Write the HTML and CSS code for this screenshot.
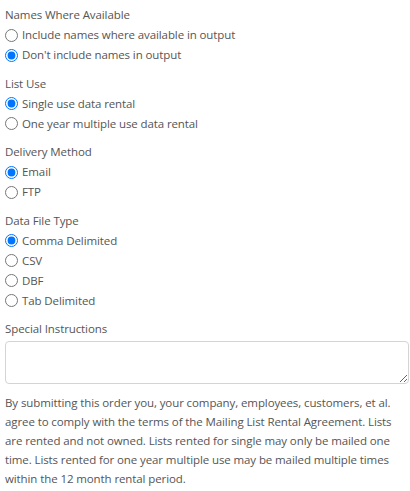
FILE: index.html
```html
<!DOCTYPE html>
<html>
<head>
<meta charset="utf-8">
<link rel="stylesheet" href="styles.css">
</head>
<body>
<form class="form">
  <div class="group">
    <div class="label">Names Where Available</div>
    <label class="opt"><input type="radio" name="names"> Include names where available in output</label>
    <label class="opt"><input type="radio" name="names" checked> Don't include names in output</label>
  </div>
  <div class="group">
    <div class="label">List Use</div>
    <label class="opt"><input type="radio" name="use" checked> Single use data rental</label>
    <label class="opt"><input type="radio" name="use"> One year multiple use data rental</label>
  </div>
  <div class="group">
    <div class="label">Delivery Method</div>
    <label class="opt"><input type="radio" name="del" checked> Email</label>
    <label class="opt"><input type="radio" name="del"> FTP</label>
  </div>
  <div class="group">
    <div class="label">Data File Type</div>
    <label class="opt"><input type="radio" name="type" checked> Comma Delimited</label>
    <label class="opt"><input type="radio" name="type"> CSV</label>
    <label class="opt"><input type="radio" name="type"> DBF</label>
    <label class="opt"><input type="radio" name="type"> Tab Delimited</label>
  </div>
  <div class="group">
    <div class="label">Special Instructions</div>
    <textarea class="area"></textarea>
  </div>
  <p class="terms">By submitting this order you, your company, employees, customers, et al. agree to comply with the terms of the Mailing List Rental Agreement. Lists are rented and not owned. Lists rented for single may only be mailed one time. Lists rented for one year multiple use may be mailed multiple times within the 12 month rental period.</p>
</form>
</body>
</html>
```
FILE: styles.css
```css
html, body {
  margin: 0;
  padding: 0;
  background: #fff;
}
body {
  font-family: "Open Sans", sans-serif;
  font-size: 11.5px;
  letter-spacing: -0.1px;
  line-height: 20px;
  color: #555;
}
.form {
  padding: 5px 1px 0 5px;
}
.group {
  display: flex;
  flex-direction: column;
  margin-bottom: 8.5px;
}
.label {
  height: 20px;
}
.opt {
  display: flex;
  align-items: center;
  height: 20px;
  gap: 3px;
}
.opt input {
  margin: 0 1px 0 0;
  width: 13px;
  height: 13px;
  accent-color: #0075ff;
}
.area {
  box-sizing: border-box;
  width: 100%;
  height: 43px;
  margin-top: 2px;
  border: 1px solid #d4d4d4;
  border-radius: 4px;
  font-family: inherit;
  font-size: 13px;
}
.terms {
  margin: 0;
  line-height: 19px;
}
```
